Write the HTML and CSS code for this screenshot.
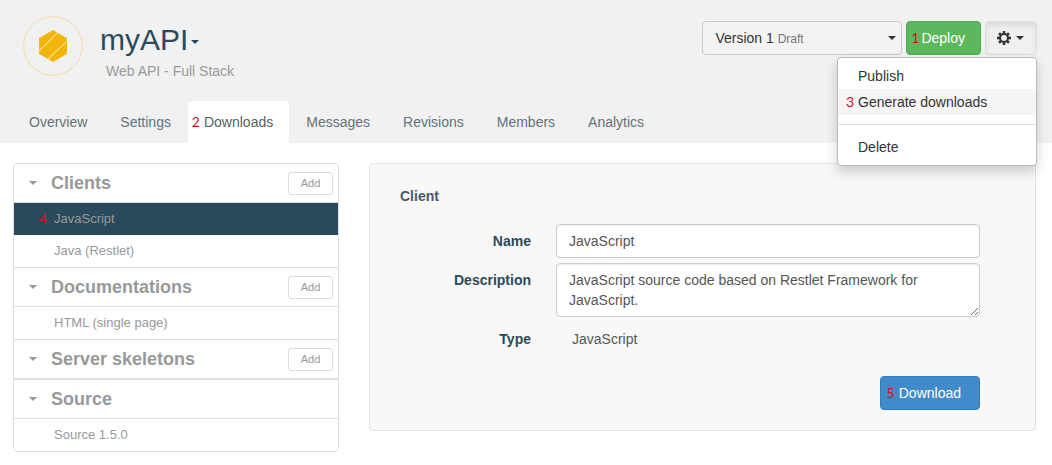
FILE: index.html
```html
<!DOCTYPE html>
<html lang="en">
<head>
<meta charset="utf-8">
<title>myAPI - Downloads</title>
<link rel="stylesheet" href="styles.css">
</head>
<body>
<header class="header">
  <div class="topbar">
    <div class="brand">
      <svg class="logo" viewBox="0 0 60 60" aria-hidden="true">
        <circle cx="30" cy="30" r="29.4" fill="none" stroke="#f2dfa8" stroke-width="1"/>
        <path d="M30 14 44 22.300V37.700L30 46 16 37.700V22.300Z" fill="#f2b50a"/>
        <path d="M15.500 35.500 35 16.500M24.500 43.500 44.500 24.500" stroke="#fdf3d2" stroke-width="1"/>
      </svg>
      <div class="brand-text">
        <h1 class="title"><a href="#">myAPI<span class="caret"></span></a></h1>
        <p class="subtitle">Web API - Full Stack</p>
      </div>
    </div>
    <div class="tools">
      <button type="button" class="btn version" aria-haspopup="listbox"><span>Version 1 <small>Draft</small></span><span class="caret"></span></button>
      <button type="button" class="btn deploy"><span class="step">Deploy<span class="marker tight">1</span></span></button>
      <div class="dropdown">
        <button type="button" class="btn gear" aria-label="Settings" aria-expanded="true">
          <svg class="cog" viewBox="0 0 14 14" aria-hidden="true">
            <g fill="#333">
              <rect x="5.700" y="0" width="2.600" height="14"/>
              <rect x="5.700" y="0" width="2.600" height="14" transform="rotate(45 7 7)"/>
              <rect x="5.700" y="0" width="2.600" height="14" transform="rotate(90 7 7)"/>
              <rect x="5.700" y="0" width="2.600" height="14" transform="rotate(135 7 7)"/>
              <circle cx="7" cy="7" r="5"/>
            </g>
            <circle cx="7" cy="7" r="2.900" fill="#f0f0f0"/>
          </svg>
          <span class="caret"></span>
        </button>
        <ul class="menu">
          <li><a href="#">Publish</a></li>
          <li><a href="#" class="hover"><span class="step">Generate downloads<span class="marker">3</span></span></a></li>
          <li class="divider" role="separator"></li>
          <li><a href="#">Delete</a></li>
        </ul>
      </div>
    </div>
  </div>
  <nav class="tabs">
    <a href="#">Overview</a>
    <a href="#">Settings</a>
    <a href="#" class="active" aria-current="page"><span class="step">Downloads<span class="marker">2</span></span></a>
    <a href="#">Messages</a>
    <a href="#">Revisions</a>
    <a href="#">Members</a>
    <a href="#">Analytics</a>
  </nav>
</header>
<main class="content">
  <aside class="sidebar">
    <section>
      <div class="head"><span class="caret"></span><h2>Clients</h2><button type="button" class="add">Add</button></div>
      <ul>
        <li><a href="#" class="selected"><span class="step">JavaScript<span class="marker wide">4</span></span></a></li>
        <li><a href="#">Java (Restlet)</a></li>
      </ul>
    </section>
    <section>
      <div class="head"><span class="caret"></span><h2>Documentations</h2><button type="button" class="add">Add</button></div>
      <ul>
        <li><a href="#">HTML (single page)</a></li>
      </ul>
    </section>
    <section>
      <div class="head"><span class="caret"></span><h2>Server skeletons</h2><button type="button" class="add">Add</button></div>
      <ul></ul>
    </section>
    <section>
      <div class="head"><span class="caret"></span><h2>Source</h2></div>
      <ul>
        <li><a href="#">Source 1.5.0</a></li>
      </ul>
    </section>
  </aside>
  <form class="panel">
    <h3>Client</h3>
    <div class="fields">
      <label for="name">Name</label>
      <input id="name" type="text" value="JavaScript">
      <label for="description">Description</label>
      <textarea id="description" rows="2">JavaScript source code based on Restlet Framework for JavaScript.</textarea>
      <label for="type">Type</label>
      <output id="type">JavaScript</output>
    </div>
    <div class="actions">
      <button type="button" class="btn download"><span class="step">Download<span class="marker">5</span></span></button>
    </div>
  </form>
</main>
</body>
</html>
```
FILE: styles.css
```css
* { box-sizing: border-box; }

body {
  margin: 0;
  background: #fff;
  color: #333;
  font: 14px/20px "Liberation Sans", Arial, sans-serif;
}

h1, h2, h3, p, ul { margin: 0; padding: 0; }
ul { list-style: none; }
a { color: inherit; text-decoration: none; }
button, input, textarea { font: inherit; }

.caret {
  flex: none;
  display: inline-block;
  border: 4px solid transparent;
  border-top-color: currentColor;
  border-bottom: 0;
}

/* Numbered step labels */
.step { position: relative; }
.marker {
  position: absolute;
  right: 100%;
  top: 0;
  margin-right: 4px;
  color: #d0141c;
  font: 14px/16px Lato, sans-serif;
}
.marker.tight { margin-right: 2px; }
.marker.wide { margin-right: 7px; }

/* Header */
.header { background: #f1f1f1; padding: 16px 15px 0 13px; }
.topbar { display: flex; justify-content: space-between; margin-bottom: 20px; }
.brand { display: flex; gap: 17px; padding-left: 10px; }
.logo { width: 60px; height: 60px; }
.brand-text { padding-top: 7px; }
.title { color: #2a4a5b; font-size: 30px; font-weight: 400; line-height: 34px; }
.title .caret { margin-left: 3px; vertical-align: middle; }
.subtitle { margin-top: 4px; padding-left: 6px; color: #999; }

.tools { display: flex; align-items: flex-start; gap: 4px; padding-top: 5px; }
.btn {
  height: 34px;
  padding: 0 14px;
  border: 1px solid #ccc;
  border-radius: 4px;
  background: #f3f3f3;
  color: #333;
}
.version {
  display: flex;
  align-items: center;
  justify-content: space-between;
  width: 200px;
  padding: 0 5px 0 12px;
}
.version small { color: #777; font-size: 12px; }
.deploy { padding-right: 15px; background: #5cb85c; border-color: #4cae4c; color: #fff; }
.gear {
  display: flex;
  align-items: center;
  gap: 5px;
  padding: 0 12px 0 11px;
  border-color: #ddd;
  background: #f0f0f0;
  box-shadow: inset 0 3px 5px rgba(0, 0, 0, .1);
}
.cog { width: 14px; height: 14px; }

.dropdown { position: relative; }
.menu {
  position: absolute;
  z-index: 1;
  top: 100%;
  right: 0;
  width: 200px;
  margin-top: 2px;
  padding: 5px 0;
  border: 1px solid #bbb;
  border-radius: 4px;
  background: #fff;
  box-shadow: 0 6px 12px rgba(0, 0, 0, .18);
}
.menu a { display: block; padding: 3px 20px; }
.menu .hover { background: #f5f5f5; }
.divider { height: 1px; margin: 9px 0; background: #e0e0e0; }

.tabs { display: flex; gap: 1px; color: #62737b; }
.tabs a { padding: 11px 16px; border-radius: 4px 4px 0 0; }
.tabs .active { background: #fff; color: #555f68; }

/* Content */
.content {
  display: grid;
  grid-template-columns: 326fr 667fr;
  align-items: start;
  gap: 30px;
  padding: 20px 16px 13px 13px;
}
.sidebar {
  overflow: hidden;
  border: 1px solid #e0e0e0;
  border-radius: 4px;
  color: #999;
}
.sidebar section + section, .sidebar ul { border-top: 1px solid #e0e0e0; }
.head { display: flex; align-items: center; height: 38px; padding: 0 5px 0 15px; }
.head h2 { flex: 1; padding-left: 14px; font-size: 18px; line-height: 20px; }
.add {
  width: 45px;
  height: 23px;
  padding: 0;
  border: 1px solid #ddd;
  border-radius: 3px;
  background: #fff;
  color: #999;
  font-size: 11px;
}
.sidebar li a { display: block; padding: 6px 40px; font-size: 13px; }
.sidebar .selected { background: #2a4a5b; }

.panel {
  padding: 22px 55px 20px 30px;
  border: 1px solid #e3e3e3;
  border-radius: 4px;
  background: #f8f8f8;
}
.panel h3 { color: #4c5a67; font-size: 14px; }
.fields {
  display: grid;
  grid-template-columns: 131fr 424fr;
  gap: 5px 25px;
  margin-top: 18px;
}
.fields label { padding-top: 7px; color: #2a4a5b; font-weight: 700; text-align: right; }
.fields input, .fields textarea {
  display: block;
  width: 100%;
  padding: 6px 12px;
  border: 1px solid #ccc;
  border-radius: 4px;
  background: #fff;
  color: #555;
  box-shadow: inset 0 1px 1px rgba(0, 0, 0, .075);
}
.fields input { height: 34px; }
.fields textarea { resize: vertical; overflow: auto; }
.fields output { padding: 7px 16px; color: #555; }
.actions { display: flex; justify-content: flex-end; margin-top: 20px; }
.download { padding: 0 18px; background: #428bca; border-color: #357ebd; color: #fff; }
```
